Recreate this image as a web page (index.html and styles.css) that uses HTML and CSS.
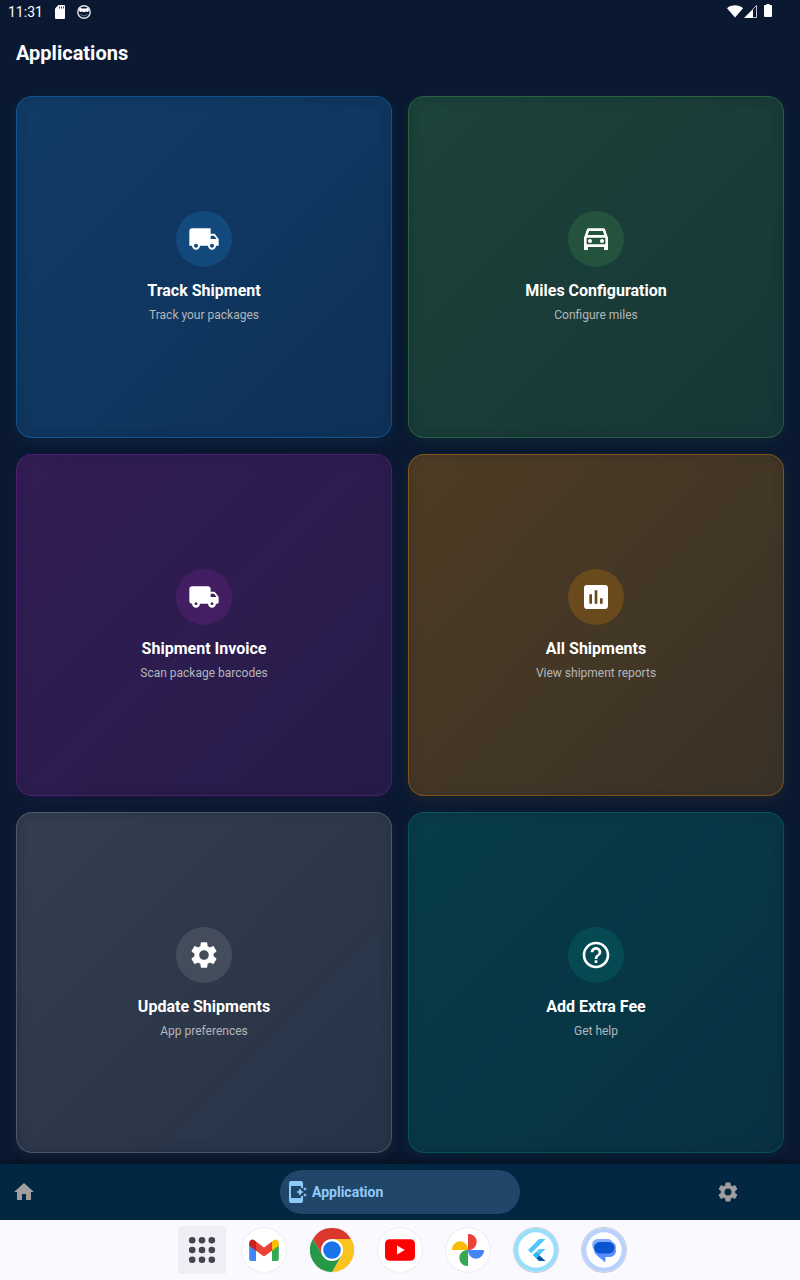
FILE: index.html
```html
<!DOCTYPE html>
<html lang="en">
<head>
<meta charset="utf-8">
<meta name="viewport" content="width=device-width, initial-scale=1">
<title>Applications</title>
<link rel="stylesheet" href="styles.css">
</head>
<body>
<div class="status">
  <div class="status-left">
    <span class="clock">11:31</span>
    <svg width="10" height="14" viewBox="0 0 10 14" aria-hidden="true"><path fill="#fff" d="M3.5 0H9a1 1 0 0 1 1 1v12a1 1 0 0 1-1 1H1a1 1 0 0 1-1-1V3.5z"/><path stroke="#0a1931" stroke-width=".8" d="M4.500 1.500v2M6.500 1.500v2M8.500 1.500v2"/></svg>
    <svg width="14" height="14" viewBox="0 0 14 14" aria-hidden="true"><circle cx="7" cy="7" r="6.200" fill="none" stroke="#dfe3e9" stroke-width="1.400"/><path fill="#fff" d="M2.500 2.500l2.500.9h4l2.500-.9.5 3.500-1.500 1-1.500-.6L7 7.200l-2-.8-1.500.6L2 6z"/><path d="M3.500 9c1.500 2.500 5.500 2.500 7 0" fill="none" stroke="#8a93a3" stroke-width=".8"/></svg>
  </div>
  <div class="status-right">
    <svg width="16" height="13" viewBox="0 0 16 13" aria-hidden="true"><path fill="#fff" d="M0 3.200C4.500-.6 11.500-.6 16 3.200L8 12.500z"/></svg>
    <svg width="13" height="13" viewBox="0 0 13 13" aria-hidden="true"><path fill="#fff" d="M0 13L9 4v9z"/><path fill="none" stroke="#c3c8d0" d="M8.500 4.500l4-4v12h-4"/></svg>
    <svg class="battery" width="8" height="14" viewBox="0 0 8 14" aria-hidden="true"><path fill="#fff" d="M2.500 0h3v1H7a1 1 0 0 1 1 1v10a1 1 0 0 1-1 1H1a1 1 0 0 1-1-1V2a1 1 0 0 1 1-1h1.500z"/></svg>
  </div>
</div>
<header class="appbar"><h1>Applications</h1></header>

<main class="grid">
  <button class="card blue" type="button">
    <span class="badge"><svg viewBox="0 0 24 24" aria-hidden="true"><path d="M20 8h-3V4H3c-1.100 0-2 .9-2 2v11h2c0 1.660 1.340 3 3 3s3-1.340 3-3h6c0 1.660 1.340 3 3 3s3-1.340 3-3h2v-5l-3-4zM6 18.500c-.83 0-1.500-.67-1.500-1.500s.67-1.500 1.500-1.500 1.500.67 1.500 1.500-.67 1.500-1.500 1.500zm13.500-9l1.960 2.500H17V9.500h2.500zm-1.500 9c-.83 0-1.500-.67-1.500-1.500s.67-1.500 1.500-1.500 1.500.67 1.500 1.500-.67 1.500-1.500 1.500z"/></svg></span>
    <span class="title">Track Shipment</span>
    <span class="sub">Track your packages</span>
  </button>
  <button class="card green" type="button">
    <span class="badge"><svg viewBox="0 0 24 24" aria-hidden="true"><path d="M18.920 5.010C18.720 4.420 18.160 4 17.500 4h-11c-.66 0-1.210.42-1.420 1.010L3 11v9.200h3V18h12v2.200h3V11l-2.080-5.990zM6.850 6h10.290l1.040 3H5.810l1.040-3zM19 16H5v-5h14v5z"/><circle cx="7.500" cy="13.500" r="1.500"/><circle cx="16.500" cy="13.500" r="1.500"/></svg></span>
    <span class="title">Miles Configuration</span>
    <span class="sub">Configure miles</span>
  </button>
  <button class="card purple" type="button">
    <span class="badge"><svg viewBox="0 0 24 24" aria-hidden="true"><path d="M19.500 8H17V6c0-1.100-.9-2-2-2H3c-1.100 0-2 .9-2 2v9c0 1.100.9 2 2 2 0 1.660 1.340 3 3 3s3-1.340 3-3h6c0 1.660 1.340 3 3 3s3-1.340 3-3h1c.55 0 1-.45 1-1v-3.330c0-.43-.14-.85-.4-1.200L20.300 8.400c-.19-.25-.49-.4-.8-.4zM6 18c-.55 0-1-.45-1-1s.45-1 1-1 1 .45 1 1-.45 1-1 1zm13.500-8.500l1.960 2.500H17V9.500h2.500zM18 18c-.55 0-1-.45-1-1s.45-1 1-1 1 .45 1 1-.45 1-1 1z"/></svg></span>
    <span class="title">Shipment Invoice</span>
    <span class="sub">Scan package barcodes</span>
  </button>
  <button class="card orange" type="button">
    <span class="badge"><svg viewBox="0 0 24 24" aria-hidden="true"><path d="M19 3H5c-1.100 0-2 .9-2 2v14c0 1.100.9 2 2 2h14c1.100 0 2-.9 2-2V5c0-1.100-.9-2-2-2zM9 17H7v-7h2v7zm4 0h-2V7h2v10zm4 0h-2v-4h2v4z"/></svg></span>
    <span class="title">All Shipments</span>
    <span class="sub">View shipment reports</span>
  </button>
  <button class="card grey" type="button">
    <span class="badge"><svg viewBox="0 0 24 24" aria-hidden="true"><path id="gear" d="M19.140 12.940c.04-.3.060-.61.060-.94 0-.32-.02-.64-.07-.94l2.030-1.580c.18-.14.23-.41.12-.61l-1.920-3.320c-.12-.22-.37-.29-.59-.22l-2.390.96c-.5-.38-1.030-.7-1.620-.94l-.36-2.540c-.04-.24-.24-.41-.48-.41h-3.840c-.24 0-.43.17-.47.41l-.36 2.540c-.59.24-1.130.57-1.620.94l-2.390-.96c-.22-.08-.47 0-.59.22L2.740 8.870c-.12.21-.08.47.12.61l2.030 1.580c-.05.3-.09.63-.09.94s.02.64.07.94l-2.030 1.580c-.18.14-.23.41-.12.61l1.920 3.320c.12.22.37.29.59.22l2.390-.96c.5.38 1.030.7 1.620.94l.36 2.540c.05.24.24.41.48.41h3.840c.24 0 .44-.17.47-.41l.36-2.540c.59-.24 1.130-.56 1.620-.94l2.390.96c.22.08.47 0 .59-.22l1.920-3.320c.12-.22.07-.47-.12-.61l-2.010-1.580zM12 15.600c-1.980 0-3.600-1.620-3.600-3.600s1.620-3.600 3.600-3.600 3.600 1.620 3.600 3.600-1.620 3.600-3.600 3.600z"/></svg></span>
    <span class="title">Update Shipments</span>
    <span class="sub">App preferences</span>
  </button>
  <button class="card teal" type="button">
    <span class="badge"><svg viewBox="0 0 24 24" aria-hidden="true"><path d="M11 18h2v-2h-2v2zm1-16C6.480 2 2 6.480 2 12s4.480 10 10 10 10-4.480 10-10S17.520 2 12 2zm0 18c-4.410 0-8-3.590-8-8s3.590-8 8-8 8 3.590 8 8-3.590 8-8 8zm0-14c-2.210 0-4 1.790-4 4h2c0-1.100.9-2 2-2s2 .9 2 2c0 2-3 1.750-3 5h2c0-2.250 3-2.500 3-5 0-2.210-1.790-4-4-4z"/></svg></span>
    <span class="title">Add Extra Fee</span>
    <span class="sub">Get help</span>
  </button>
</main>

<nav class="tabs" aria-label="Sections">
  <button class="tab" type="button" aria-label="Home"><svg width="24" height="24" viewBox="0 0 24 24"><path d="M10 20v-6h4v6h5v-8h3L12 3 2 12h3v8z"/></svg></button>
  <button class="tab active" type="button" aria-current="page">
    <svg width="20" height="24" viewBox="0 0 20 24" aria-hidden="true"><path d="M3 1h10a2 2 0 0 1 2 2v5h-2V6H3v12h10v-2h2v5a2 2 0 0 1-2 2H3a2 2 0 0 1-2-2V3a2 2 0 0 1 2-2z"/><path d="M12 8.300l1.300 2.400 2.400 1.300-2.400 1.300L12 15.700l-1.300-2.400L8.300 12l2.400-1.300zM17 7.200l.8 1 1 .8-1 .8-.8 1-.8-1-1-.8 1-.8zM17 13.200l.8 1 1 .8-1 .8-.8 1-.8-1-1-.8 1-.8z"/></svg>
    <span>Application</span>
  </button>
  <button class="tab last" type="button" aria-label="Settings"><svg width="24" height="24" viewBox="0 0 24 24"><use href="#gear"/></svg></button>
</nav>

<div class="taskbar">
  <button class="all-apps" type="button" aria-label="All apps"><svg width="28" height="28" viewBox="0 0 28 28" fill="#45434f"><circle cx="4.200" cy="4.200" r="3.300"/><circle cx="14" cy="4.200" r="3.300"/><circle cx="23.800" cy="4.200" r="3.300"/><circle cx="4.200" cy="14" r="3.300"/><circle cx="14" cy="14" r="3.300"/><circle cx="23.800" cy="14" r="3.300"/><circle cx="4.200" cy="23.800" r="3.300"/><circle cx="14" cy="23.800" r="3.300"/><circle cx="23.800" cy="23.800" r="3.300"/></svg></button>
  <div class="apps">
    <button class="app" type="button" aria-label="Gmail"><svg viewBox="0 0 44 44"><path fill="#4285f4" d="M7.200 15.500L14 20.500V33H9.200a2 2 0 0 1-2-2z"/><path fill="#34a853" d="M30 20.500l6.800-5V31a2 2 0 0 1-2 2H30z"/><path fill="#fbbc04" d="M30 13.500l1.500-1.200c2.200-1.700 5.300-.1 5.300 2.500v3L30 22.700z"/><path fill="#ea4335" d="M14 22.700v-9.200l8 6 8-6v9.200l-8 5.800z"/><path fill="#c5221f" d="M7.200 14.800c0-2.600 3.100-4.200 5.300-2.500l1.500 1.200v9.200l-6.800-5z"/></svg></button>
    <button class="app" type="button" aria-label="Chrome"><svg viewBox="0 0 48 48"><path fill="#db372d" d="M24 12h20.800A24 24 0 0 0 3.200 12l10.400 18z"/><path fill="#fcc31e" d="M34.400 30L24 48a24 24 0 0 0 20.800-36H24z"/><path fill="#269848" d="M13.600 30L3.200 12A24 24 0 0 0 24 48l10.400-18z"/><circle cx="24" cy="24" r="12" fill="#fff"/><circle cx="24" cy="24" r="9.600" fill="#1a73e8"/></svg></button>
    <button class="app" type="button" aria-label="YouTube"><svg viewBox="0 0 44 44"><rect x="7" y="11.300" width="30" height="21.400" rx="4.500" fill="#f00"/><path fill="#fff" d="M19 17.500l7.800 4.500-7.800 4.500z"/></svg></button>
    <button class="app" type="button" aria-label="Photos"><svg viewBox="0 0 44 44"><path fill="#ea4335" d="M22 22V6a8 8 0 0 1 8.700 8 8 8 0 0 1-8.700 8z"/><path fill="#4285f4" d="M22 22h16a8 8 0 0 1-8 8.700 8 8 0 0 1-8-8.700z"/><path fill="#34a853" d="M22 22v16a8 8 0 0 1-8.700-8 8 8 0 0 1 8.700-8z"/><path fill="#fbbc04" d="M22 22H6a8 8 0 0 1 8-8.700 8 8 0 0 1 8 8.700z"/></svg></button>
    <button class="app ring" type="button" aria-label="Flutter app"><svg viewBox="0 0 44 44"><circle cx="22" cy="22" r="22" fill="#97dffb"/><circle cx="22" cy="22" r="17.700" fill="#fff"/><path fill="#54c5f8" d="M14 22l11-11h6.500L17.300 25.300zM19 27l6-6h6.500l-9.200 9.300z"/><path fill="#01579b" d="M22.300 30.300l3-3L31.500 33H25z"/><path fill="#29b6f6" d="M19 27l3.300-3.300 3.300 3.300-3.300 3.300z"/></svg></button>
    <button class="app ring" type="button" aria-label="Messages"><svg viewBox="0 0 44 44"><circle cx="22" cy="22" r="22" fill="#b9d1fc"/><circle cx="22" cy="22" r="17.700" fill="#fff"/><path fill="#5b8dff" d="M12 18h22v5a6 6 0 0 1-6 6h-4.500v4c0 1-.8 1.200-1.500.6l-7-6.100a7 7 0 0 1-3-5.500z"/><path fill="#82aaff" d="M15 11h11c2.500 0 4 1.500 4.500 3 2.200.5 3.500 2.500 3.500 5v3H12.500a6 6 0 0 1-2.300-5A5.500 5.500 0 0 1 15 11z"/><rect x="12" y="14" width="20.500" height="11.500" rx="5.700" fill="#0856cf"/></svg></button>
  </div>
</div>
</body>
</html>
```

FILE: styles.css
```css
* { box-sizing: border-box; }

body {
  margin: 0;
  min-height: 100vh;
  display: flex;
  flex-direction: column;
  background: #0a1931;
  color: #fff;
  font-family: Roboto, "Noto Sans", sans-serif;
}

button {
  margin: 0;
  padding: 0;
  border: 0;
  background: none;
  color: inherit;
  font: inherit;
  cursor: pointer;
}

svg { display: block; }

.status {
  height: 24px;
  padding: 0 28px 0 8px;
  display: flex;
  align-items: center;
  justify-content: space-between;
}

.status-left,
.status-right {
  display: flex;
  align-items: center;
}

.status-left { gap: 12px; }
.status-right { gap: 1px; padding-bottom: 2px; }
.battery { margin-left: 6px; }

.clock {
  font-size: 14px;
  line-height: 24px;
}

.appbar {
  height: 56px;
  padding: 2px 16px 0;
  display: flex;
  align-items: center;
}

.appbar h1 {
  margin: 0;
  font-size: 20px;
  line-height: 28px;
  font-weight: 700;
}

.grid {
  flex: 1;
  padding: 16px 16px 10px;
  display: grid;
  grid-template-columns: 1fr 1fr;
  align-content: start;
  gap: 16px;
}

.card {
  aspect-ratio: 1.1;
  display: flex;
  flex-direction: column;
  align-items: center;
  justify-content: center;
  border: 1px solid rgb(var(--tone) / 0.3);
  border-radius: 16px;
  background: linear-gradient(135deg, rgb(var(--tone) / 0.28), rgb(var(--tone) / 0.2)) border-box;
  box-shadow: 0 4px 12px rgb(var(--tone) / 0.08), inset 0 0 12px rgb(10 25 49 / 0.2);
}

.blue { --tone: 33 150 243; }
.green { --tone: 76 175 80; }
.purple { --tone: 156 39 176; }
.orange { --tone: 255 152 0; }
.grey { --tone: 158 158 158; }
.teal { --tone: 0 150 136; }

.badge {
  width: 56px;
  height: 56px;
  display: grid;
  place-items: center;
  border-radius: 50%;
  background: rgb(var(--tone) / 0.2);
}

.badge svg {
  width: 32px;
  height: 32px;
  fill: #fff;
}

.title {
  margin-top: 12px;
  font-size: 16px;
  line-height: 24px;
  font-weight: 700;
}

.sub {
  margin-top: 4px;
  font-size: 12px;
  line-height: 16px;
  color: #b5b7ba;
}

.tabs {
  display: grid;
  grid-template-columns: 35% 30% 35%;
  padding: 6px 0;
  background: #002642;
  box-shadow: 0 -2px 10px rgb(0 0 0 / 0.4);
}

.tab {
  height: 44px;
  width: 48px;
  display: flex;
  align-items: center;
  justify-content: center;
}

.tab svg { fill: #9e9e9e; }

.tab.active {
  width: 100%;
  padding-left: 8px;
  justify-content: flex-start;
  gap: 4px;
  border-radius: 22px;
  background: #204669;
  color: #90caf9;
  font-size: 14px;
  line-height: 20px;
  font-weight: 700;
}

.tab.active svg { fill: #90caf9; }

.tab.last {
  justify-self: end;
  margin-right: 48px;
}

.taskbar {
  height: 60px;
  padding-left: 4px;
  display: flex;
  align-items: center;
  justify-content: center;
  gap: 16px;
  background: #faf9ff;
}

.all-apps {
  width: 48px;
  height: 48px;
  display: grid;
  place-items: center;
  border-radius: 2px;
  background: #efeef4;
}

.apps {
  display: flex;
  gap: 24px;
}

.app {
  width: 44px;
  height: 44px;
  border-radius: 50%;
  background: #fff;
  box-shadow: 0 0 2px rgb(0 0 0 / 0.15);
}

.app svg {
  width: 44px;
  height: 44px;
}

.app.ring { box-shadow: 0 0 0 1px #c9cbd6; }
```
